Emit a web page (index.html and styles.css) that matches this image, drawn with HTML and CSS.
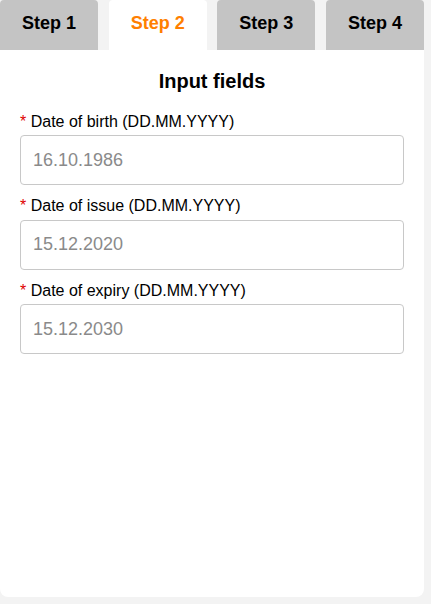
FILE: index.html
```
<!DOCTYPE html>
<html>
<head>
<meta charset="utf-8">
<link rel="stylesheet" href="styles.css">
</head>
<body>
<div class="app">
  <div class="tabs">
    <div class="tab">Step 1</div>
    <div class="tab active">Step 2</div>
    <div class="tab">Step 3</div>
    <div class="tab">Step 4</div>
  </div>
  <div class="panel">
    <h2 class="title">Input fields</h2>
    <div class="field">
      <label class="label"><span class="req">*</span> Date of birth (DD.MM.YYYY)</label>
      <input class="input" type="text" placeholder="16.10.1986">
    </div>
    <div class="field">
      <label class="label"><span class="req">*</span> Date of issue (DD.MM.YYYY)</label>
      <input class="input" type="text" placeholder="15.12.2020">
    </div>
    <div class="field">
      <label class="label"><span class="req">*</span> Date of expiry (DD.MM.YYYY)</label>
      <input class="input" type="text" placeholder="15.12.2030">
    </div>
  </div>
</div>
</body>
</html>
```
FILE: styles.css
```
html, body {
  margin: 0;
  padding: 0;
  background: #f3f3f3;
  font-family: "Liberation Sans", Arial, sans-serif;
}
.app {
  width: 424px;
}
.tabs {
  display: flex;
  justify-content: space-between;
  height: 50px;
}
.tab {
  width: 98px;
  height: 50px;
  background: #c4c4c4;
  border-radius: 4px 4px 0 0;
  display: flex;
  align-items: center;
  justify-content: center;
  font-weight: bold;
  font-size: 18px;
  color: #000;
  padding-bottom: 4px;
  box-sizing: border-box;
}
.tab.active {
  background: #fff;
  color: #ff8000;
}
.panel {
  background: #fff;
  height: 547px;
  border-radius: 0 0 8px 8px;
  padding: 20px 20px 0 20px;
  box-sizing: border-box;
}
.title {
  margin: 0 0 20.5px 0;
  font-size: 20px;
  line-height: 22px;
  font-weight: bold;
  text-align: center;
  color: #000;
}
.field {
  display: flex;
  flex-direction: column;
  gap: 4.5px;
  margin-bottom: 12px;
}
.label {
  font-size: 16px;
  line-height: 18px;
  color: #000;
}
.req {
  color: #e00000;
}
.input {
  width: 384px;
  height: 50px;
  box-sizing: border-box;
  border: 1px solid #c8c8c8;
  border-radius: 4px;
  padding: 0 12px;
  font-family: "Liberation Sans", Arial, sans-serif;
  font-size: 18px;
  color: #333;
  outline: none;
  margin: 0;
}
.input::placeholder {
  color: #8a8a8a;
  opacity: 1;
}
```
